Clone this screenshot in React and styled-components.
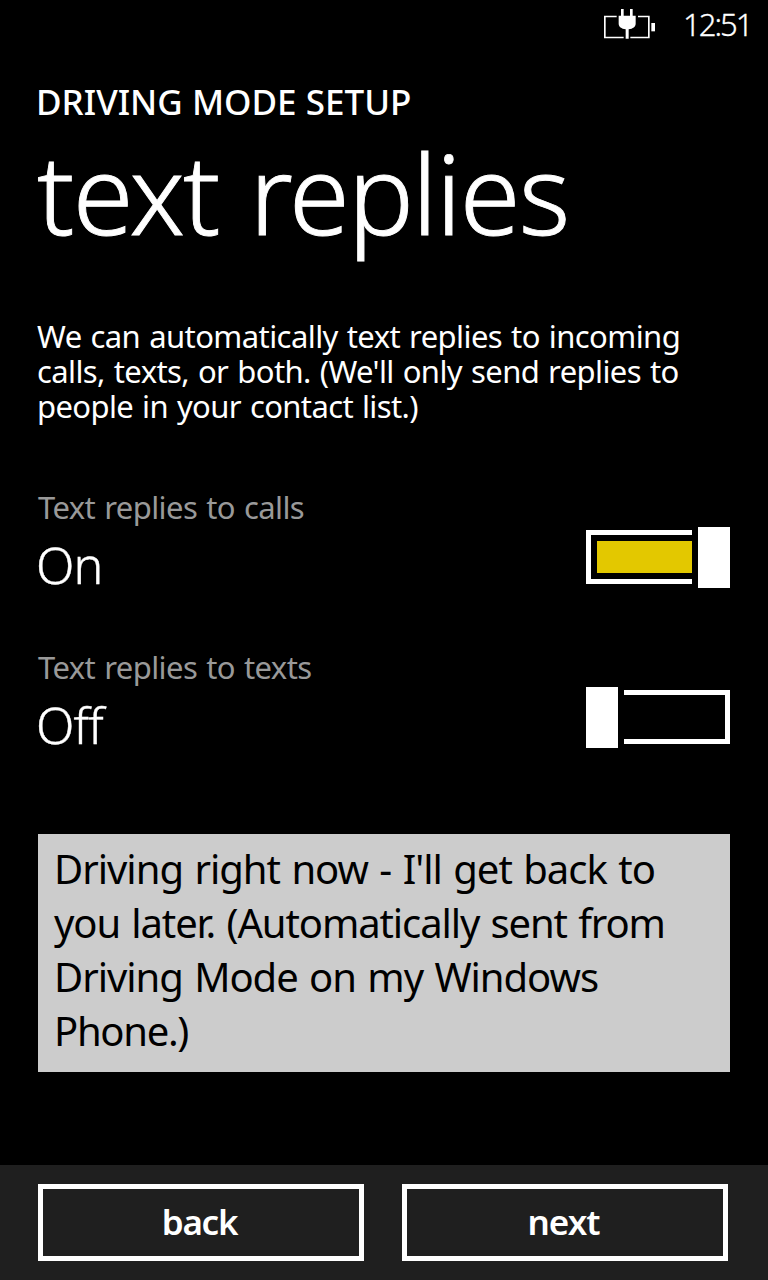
import React, { useState } from 'react';
import styled, { createGlobalStyle } from 'styled-components';

const GlobalStyle = createGlobalStyle`
  *, *::before, *::after { box-sizing: border-box; }
  body {
    margin: 0;
    background: #000;
    color: #fff;
    font-family: "Noto Sans", "Open Sans", sans-serif;
  }
`;

const Screen = styled.div`
  display: flex;
  flex-direction: column;
  width: 768px;
  height: 1280px;
  background: #000;
  overflow: hidden;
`;

const StatusBar = styled.header`
  display: flex;
  justify-content: flex-end;
  align-items: flex-start;
  height: 48px;
  padding: 0 16px 0 0;
`;

const BatteryIcon = styled.svg`
  display: block;
  width: 51px;
  height: 30px;
  margin: 9px 28px 0 0;
  fill: #fff;
`;

const Clock = styled.time`
  width: 69px;
  font-size: 31px;
  font-weight: 300;
  line-height: 49px;
  letter-spacing: -2px;
  white-space: nowrap;
  -webkit-text-stroke: 0.3px #fff;
`;

const Content = styled.main`
  display: flex;
  flex-direction: column;
  flex: 1;
  padding: 30px 38px 0;
`;

const Eyebrow = styled.div`
  margin-left: -2px;
  font-size: 35px;
  font-weight: 500;
  line-height: 48px;
  letter-spacing: 0.02px;
  white-space: nowrap;
`;

const Title = styled.h1`
  margin: 6px 0 67px -1px;
  font-size: 110px;
  font-weight: 300;
  line-height: 120px;
  letter-spacing: -1.75px;
  word-spacing: 4px;
  white-space: nowrap;
  -webkit-text-stroke: 0.9px #fff;
`;

const Paragraph = styled.p`
  margin: 0 0 63px -1px;
  font-size: 31px;
  line-height: 35px;
  word-spacing: 1.5px;
`;

const Line = styled.span`
  display: block;
  white-space: nowrap;
  letter-spacing: ${(p) => p.$track}px;
`;

const Setting = styled.section`
  display: flex;
  justify-content: space-between;
  align-items: flex-start;
  height: 160px;
`;

const SettingLabel = styled.div`
  font-size: 31px;
  line-height: 40px;
  letter-spacing: -0.58px;
  word-spacing: 1.5px;
  color: #999;
`;

const SettingValue = styled.div`
  margin: 8px 0 0 -2px;
  font-size: 50px;
  font-weight: 300;
  line-height: 60px;
  letter-spacing: -0.8px;
  -webkit-text-stroke: 0.4px #fff;
`;

const Toggle = styled.button`
  display: flex;
  flex-direction: ${(p) => (p.$on ? 'row' : 'row-reverse')};
  align-items: flex-start;
  gap: 6px;
  width: 144px;
  height: 61px;
  margin: 40px 0 0;
  padding: 0;
  border: 0;
  background: none;
`;

const Track = styled.span`
  flex: 1;
  height: 54px;
  margin-top: 3px;
  padding: ${(p) => (p.$on ? '6px 0 6px 6px' : '6px 6px 6px 0')};
  border: 5px solid #fff;
  border-${(p) => (p.$on ? 'right' : 'left')}: 0;
`;

const TrackFill = styled.span`
  display: block;
  height: 100%;
  background: ${(p) => (p.$on ? '#e3c800' : 'transparent')};
`;

const Thumb = styled.span`
  width: 32px;
  height: 61px;
  background: #fff;
`;

const MessageBox = styled.div`
  height: 238px;
  margin-top: 27px;
  padding: 8px 16px;
  background: #ccc;
  color: #000;
  font-size: 40px;
  line-height: 54px;
  word-spacing: 2px;
`;

const Footer = styled.footer`
  display: flex;
  gap: 38px;
  height: 115px;
  padding: 19px 40px 0 38px;
  background: #1f1f1f;
`;

const FooterButton = styled.button`
  flex: 1;
  height: 77px;
  padding: 0 3px 2px 0;
  border: 5px solid #fff;
  background: transparent;
  color: #fff;
  font: 600 35px/60px "Noto Sans", "Open Sans", sans-serif;
  letter-spacing: ${(p) => p.$track}px;
`;

function ChargingIcon() {
  return (
    <BatteryIcon viewBox="42 27 153 90" aria-label="Charging">
      <path d="M42 47H80V52H47V110H101V115H42Z" />
      <path d="M144 47H179V115H121V110H174V52H144Z" />
      <rect x="184" y="69" width="11" height="25" />
      <path d="M93 27h8v20h19V27h8v20h9v24c0 9-8 15-21 17v28h-9V88c-13-2-21-8-21-17V47h7Z" />
    </BatteryIcon>
  );
}

function ToggleSetting({ label, initial }) {
  const [on, setOn] = useState(initial);
  return (
    <Setting>
      <div>
        <SettingLabel>{label}</SettingLabel>
        <SettingValue>{on ? 'On' : 'Off'}</SettingValue>
      </div>
      <Toggle $on={on} role="switch" aria-checked={on} aria-label={label} onClick={() => setOn(!on)}>
        <Track $on={on}>
          <TrackFill $on={on} />
        </Track>
        <Thumb />
      </Toggle>
    </Setting>
  );
}

export default function App() {
  return (
    <>
      <GlobalStyle />
      <Screen>
        <StatusBar>
          <ChargingIcon />
          <Clock>12:51</Clock>
        </StatusBar>
        <Content>
          <Eyebrow>DRIVING MODE SETUP</Eyebrow>
          <Title>text replies</Title>
          <Paragraph>
            <Line $track={-0.58}>We can automatically text replies to incoming</Line>
            <Line $track={-0.6}>calls, texts, or both. (We'll only send replies to</Line>
            <Line $track={-0.62}>people in your contact list.)</Line>
          </Paragraph>
          <ToggleSetting label="Text replies to calls" initial={true} />
          <ToggleSetting label="Text replies to texts" initial={false} />
          <MessageBox>
            <Line $track={-1}>Driving right now - I'll get back to</Line>
            <Line $track={-1.11}>you later. (Automatically sent from</Line>
            <Line $track={-1.03}>Driving Mode on my Windows</Line>
            <Line $track={-1.3}>Phone.)</Line>
          </MessageBox>
        </Content>
        <Footer>
          <FooterButton $track={-1.3}>back</FooterButton>
          <FooterButton $track={-1}>next</FooterButton>
        </Footer>
      </Screen>
    </>
  );
}
